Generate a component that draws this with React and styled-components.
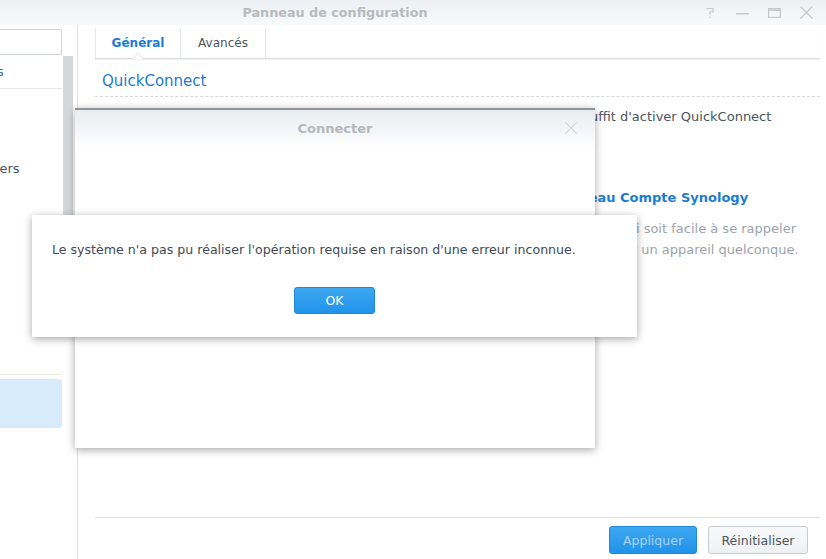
import React from "react";
import styled, { createGlobalStyle } from "styled-components";

const GlobalStyle = createGlobalStyle`
  html, body {
    margin: 0;
    padding: 0;
    width: 826px;
    height: 559px;
    overflow: hidden;
    background: #fff;
  }
  body {
    font-family: "DejaVu Sans", Verdana, sans-serif;
    font-size: 13px;
    color: #4a5560;
  }
`;

const Viewport = styled.div`
  width: 826px;
  height: 559px;
  overflow: hidden;
`;

const Window = styled.div`
  position: relative;
  margin-left: -156px;
  width: 982px;
  height: 559px;
  display: flex;
  flex-direction: column;
  background: #fff;
`;

const TitleBar = styled.div`
  flex: none;
  height: 25px;
  display: grid;
  grid-template-columns: 1fr auto 1fr;
  align-items: center;
  background: linear-gradient(#edf0f3, #f8f9fb);
`;

const Title = styled.div`
  grid-column: 2;
  font-weight: bold;
  font-size: 12.75px;
  color: #b6bbc0;
`;

const Tools = styled.div`
  grid-column: 3;
  justify-self: end;
  display: flex;
  padding-right: 4px;
`;

const Tool = styled.div`
  width: 32px;
  height: 25px;
  display: flex;
  align-items: center;
  justify-content: center;
`;

const Body = styled.div`
  flex: 1;
  display: flex;
  min-height: 0;
`;

const Sidebar = styled.div`
  flex: none;
  width: 233px;
  display: flex;
  flex-direction: column;
`;

const Search = styled.div`
  margin: 4px 15px 0 12px;
  height: 24px;
  border: 1px solid #cdd2d7;
  border-radius: 2px;
  background: #fff;
`;

const ListArea = styled.div`
  display: flex;
  align-items: flex-start;
  margin-top: 1px;
`;

const List = styled.div`
  width: 218px;
`;

const Scrollbar = styled.div`
  margin-left: 1px;
  width: 10px;
  height: 262px;
  background: #d5d8db;
`;

const Header = styled.div`
  height: 32px;
  line-height: 32px;
  padding-left: ${(p) => p.$indent}px;
  color: #3a6d9e;
  border-bottom: 1px solid #e6e9ec;
  white-space: nowrap;
`;

const Group = styled.div`
  padding-top: ${(p) => p.$top || 0}px;
  border-top: ${(p) => (p.$line ? "1px solid #ece8e4" : "none")};
  margin-top: ${(p) => p.$gap || 0}px;
`;

const Item = styled.div`
  height: ${(p) => p.$h || 40}px;
  line-height: ${(p) => p.$h || 40}px;
  padding-left: ${(p) => p.$indent}px;
  white-space: nowrap;
  color: #4a5560;
  border-radius: 0 3px 3px 0;
  background: ${(p) => (p.$active ? "#d7ebfb" : "transparent")};
`;

const Content = styled.div`
  flex: 1;
  display: flex;
  flex-direction: column;
  border-left: 1px solid #e0e3e6;
  padding: 0 6px 0 17px;
  min-width: 0;
`;

const TabBar = styled.div`
  flex: none;
  margin-top: 3px;
  height: 30px;
  display: flex;
  border-bottom: 1px solid #d9dde0;
  box-shadow: 0 1px 1px rgba(0, 0, 0, 0.05);
`;

const Tab = styled.div`
  position: relative;
  width: 84px;
  display: flex;
  align-items: center;
  justify-content: center;
  font-size: 12px;
  border-left: ${(p) => (p.$first ? "1px solid #e4e7ea" : "none")};
  border-right: 1px solid #e4e7ea;
  font-weight: ${(p) => (p.$active ? "bold" : "normal")};
  color: ${(p) => (p.$active ? "#1a7cd0" : "#4a5560")};

  ${(p) =>
    p.$active &&
    `
    &::before, &::after {
      content: "";
      position: absolute;
      left: 50%;
      width: 0;
      height: 0;
      border-style: solid;
      border-color: transparent;
    }
    &::before {
      bottom: -1px;
      margin-left: -6px;
      border-width: 0 6px 6px 6px;
      border-bottom-color: #d9dde0;
    }
    &::after {
      bottom: -1px;
      margin-left: -5px;
      border-width: 0 5px 5px 5px;
      border-bottom-color: #fff;
    }
  `}
`;

const Main = styled.div`
  flex: 1;
  min-height: 0;
  overflow: hidden;
`;

const SectionTitle = styled.div`
  margin-top: 7px;
  height: 30px;
  line-height: 30px;
  padding-left: 7px;
  font-size: 15px;
  color: #1a7cd0;
  border-bottom: 1px dashed #d3d8dc;
`;

const Fields = styled.div`
  padding: 10px 0 0 7px;
`;

const Line = styled.div`
  line-height: ${(p) => p.$lh || 20}px;
  margin-top: ${(p) => p.$mt || 0}px;
  white-space: nowrap;
  color: ${(p) => p.$color || "#4a5560"};
  font-weight: ${(p) => (p.$bold ? "bold" : "normal")};
`;

const Footer = styled.div`
  flex: none;
  box-sizing: border-box;
  height: 42px;
  border-top: 1px solid #dde1e4;
  display: flex;
  justify-content: flex-end;
  align-items: flex-start;
  gap: 11px;
  padding: 8px 12px 0 0;
`;

const Button = styled.button`
  height: ${(p) => p.$h || 28}px;
  width: ${(p) => p.$w}px;
  padding: 0;
  border-radius: 3px;
  font-family: "DejaVu Sans", Verdana, sans-serif;
  font-size: 12.5px;
  cursor: pointer;
  border: 1px solid ${(p) => (p.$primary ? "#1d87d9" : "#c6ccd2")};
  background: ${(p) =>
    p.$primary
      ? "linear-gradient(#3ea7f1, #2193e9)"
      : "linear-gradient(#f8f9fa, #eef1f4)"};
  color: ${(p) => p.$fg || (p.$primary ? "#fff" : "#4a5560")};
`;

const Dialog = styled.div`
  position: absolute;
  left: 231px;
  top: 108px;
  width: 520px;
  height: 338px;
  background: #fff;
  border-top: 2px solid #8d949b;
  box-shadow: 0 2px 8px rgba(0, 0, 0, 0.35);
  display: flex;
  flex-direction: column;
`;

const DialogHead = styled.div`
  height: 36px;
  display: grid;
  grid-template-columns: 1fr auto 1fr;
  align-items: center;
  background: linear-gradient(#e8ecf0, #fdfdfe);
`;

const DialogTitle = styled.div`
  grid-column: 2;
  font-weight: bold;
  font-size: 13px;
  color: #b3b8bd;
`;

const DialogClose = styled.div`
  grid-column: 3;
  justify-self: end;
  padding-right: 18px;
  display: flex;
`;

const Alert = styled.div`
  position: absolute;
  left: 188px;
  top: 215px;
  width: 605px;
  height: 122px;
  box-sizing: border-box;
  background: #fff;
  box-shadow: 0 2px 8px rgba(0, 0, 0, 0.35);
  padding: 25px 20px 0 20px;
  display: flex;
  flex-direction: column;
  align-items: flex-start;
`;

const AlertText = styled.div`
  font-size: 12.6px;
  line-height: 20px;
  color: #3f4a55;
  white-space: nowrap;
`;

const AlertActions = styled.div`
  align-self: stretch;
  display: flex;
  justify-content: center;
  margin-top: 27px;
`;

const Help = () => (
  <svg width="10" height="12" viewBox="0 0 10 12" fill="none" stroke="#c4c9ce" strokeWidth="1.2">
    <path d="M1.5 1.5h6.5v3.5h-3v2.5" />
    <path d="M5 9.5v1.5" />
  </svg>
);

const Minimize = () => (
  <svg width="13" height="12" viewBox="0 0 13 12">
    <rect x="0" y="6" width="13" height="1.4" fill="#c4c9ce" />
  </svg>
);

const Maximize = () => (
  <svg width="13" height="12" viewBox="0 0 13 12" fill="none" stroke="#c4c9ce" strokeWidth="1.2">
    <rect x="0.6" y="1.6" width="11.8" height="8.8" />
    <path d="M0.6 3.2h11.8" strokeWidth="1.6" />
  </svg>
);

const Close = ({ size = 13, color = "#c4c9ce" }) => (
  <svg width={size} height={size} viewBox="0 0 13 13" fill="none" stroke={color} strokeWidth="1.2">
    <path d="M0.5 0.5l12 12M12.5 0.5l-12 12" />
  </svg>
);

export default function App() {
  return (
    <Viewport>
      <GlobalStyle />
      <Window>
        <TitleBar>
          <Title>Panneau de configuration</Title>
          <Tools>
            <Tool><Help /></Tool>
            <Tool><Minimize /></Tool>
            <Tool><Maximize /></Tool>
            <Tool><Close /></Tool>
          </Tools>
        </TitleBar>
        <Body>
          <Sidebar>
            <Search />
            <ListArea>
              <List>
                <Header $indent={38}>Partage de fichiers</Header>
                <Group $top={20}>
                  <Item $indent={49}>Dossier partagé</Item>
                  <Item $indent={49}>Services de fichiers</Item>
                  <Item $indent={49}>Utilisateur</Item>
                  <Item $indent={49}>Groupe</Item>
                  <Item $indent={49}>Domaine/LDAP</Item>
                  <Item $indent={49}>Connectivité</Item>
                </Group>
                <Group $line $gap={25} $top={4}>
                  <Item $indent={49} $h={49} $active>QuickConnect</Item>
                </Group>
              </List>
              <Scrollbar />
            </ListArea>
          </Sidebar>
          <Content>
            <TabBar>
              <Tab $first $active>Général</Tab>
              <Tab>Avancés</Tab>
            </TabBar>
            <Main>
              <SectionTitle>QuickConnect</SectionTitle>
              <Fields>
                <Line>
                  Pour accéder à votre DiskStation via Internet depuis n'importe où, il vous suffit d'activer QuickConnect
                </Line>
                <Line>et de vous connecter avec votre Compte Synology.</Line>
                <Line $mt={10}>Activer QuickConnect</Line>
                <Line $mt={11} $bold $color="#1a7cd0">
                  Connectez-vous à un compte ou inscrivez-vous pour avoir un nouveau Compte Synology
                </Line>
                <Line $mt={10} $lh={21} $color="#9ca3aa">
                  Saisissez ici un QuickConnect ID unique et personnalisé pour votre DiskStation qui soit facile à se rappeler
                </Line>
                <Line $lh={21} $color="#9ca3aa">
                  afin de pouvoir vous connecter facilement à votre DiskStation depuis Internet, sur un appareil quelconque.
                </Line>
              </Fields>
            </Main>
            <Footer>
              <Button $primary $w={88} $fg="#a9d5f6">Appliquer</Button>
              <Button $w={100}>Réinitialiser</Button>
            </Footer>
          </Content>
        </Body>

        <Dialog>
          <DialogHead>
            <DialogTitle>Connecter</DialogTitle>
            <DialogClose><Close size={12} color="#cdd1d5" /></DialogClose>
          </DialogHead>
        </Dialog>

        <Alert>
          <AlertText>
            Le système n'a pas pu réaliser l'opération requise en raison d'une erreur inconnue.
          </AlertText>
          <AlertActions>
            <Button $primary $w={81} $h={27}>OK</Button>
          </AlertActions>
        </Alert>
      </Window>
    </Viewport>
  );
}
